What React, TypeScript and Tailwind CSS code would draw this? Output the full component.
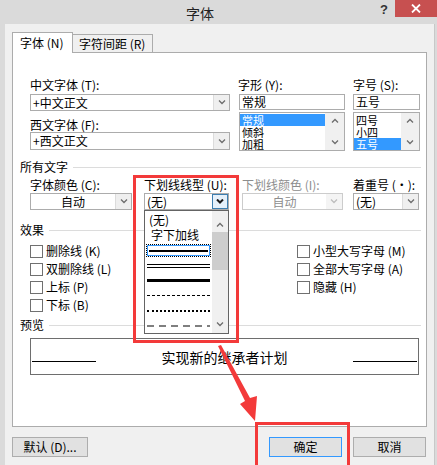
import React from 'react';

const RED = 'border-[#f33a3a]';

function Chevron({ up = false, bold = false, color = '#6d6d6d' }: { up?: boolean; bold?: boolean; color?: string }) {
  return (
    <svg width="8" height="5" viewBox="0 0 8 5">
      <path d={up ? 'M1 4.5 L4 1.5 L7 4.5' : 'M1 0.5 L4 3.5 L7 0.5'} stroke={color} strokeWidth={bold ? 2 : 1.3} fill="none" />
    </svg>
  );
}

function Combo({
  w,
  h,
  text,
  center = false,
  disabled = false,
  active = false,
}: {
  w: string;
  h: string;
  text: string;
  center?: boolean;
  disabled?: boolean;
  active?: boolean;
}) {
  return (
    <div className={`${w} ${h} flex bg-white border ${disabled ? 'border-[#cccccc]' : 'border-[#acacac]'}`}>
      <div
        className={`flex-1 flex items-center leading-[14px] ${center ? 'justify-center' : 'pl-[2px]'} ${
          disabled ? 'text-[#8d8d8d]' : 'text-black'
        }`}
      >
        {text}
      </div>
      <div
        className={`w-[16px] flex items-center justify-center ${
          active ? 'bg-[#e5f1fb] border border-[#3c7fb1]' : disabled ? 'bg-[#f4f4f4]' : 'bg-[#efefef] border-l border-[#dcdcdc]'
        }`}
      >
        <Chevron bold={active} color={active ? '#1a1a1a' : disabled ? '#bdbdbd' : '#6d6d6d'} />
      </div>
    </div>
  );
}

function Label({ children, className = '', gray = false }: { children: React.ReactNode; className?: string; gray?: boolean }) {
  return <div className={`h-[14px] leading-[14px] whitespace-nowrap ${gray ? 'text-[#8d8d8d]' : ''} ${className}`}>{children}</div>;
}

function Section({ title, className = '' }: { title: string; className?: string }) {
  return (
    <div className={`flex items-center h-[14px] leading-[14px] pr-[5px] ${className}`}>
      <span>{title}</span>
      <div className="flex-1 h-px bg-[#dcdcdc] ml-[5px]" />
    </div>
  );
}

function ListBox({ items, selected, w, itemW }: { items: string[]; selected: number; w: string; itemW: string }) {
  return (
    <div className={`${w} h-[39px] mt-[2px] flex bg-white border border-[#acacac]`}>
      <div className={`${itemW} flex flex-col text-[11px] leading-[12px] pt-[1px]`}>
        {items.map((it, i) => (
          <div key={it} className={`h-[12px] pl-[2px] ${i === selected ? 'bg-[#3399ff] text-white' : ''}`}>
            {it}
          </div>
        ))}
      </div>
      <div className="flex-1 bg-[#f0f0f0] flex flex-col items-center justify-between py-[5px]">
        <Chevron up />
        <Chevron />
      </div>
    </div>
  );
}

function Check({ text }: { text: string }) {
  return (
    <div className="h-[18px] flex items-center">
      <div className="w-[13px] h-[13px] border border-[#707070] bg-white" />
      <span className="ml-[3px] leading-[14px]">{text}</span>
    </div>
  );
}

function Button({ text, w, primary = false }: { text: string; w: string; primary?: boolean }) {
  return (
    <div
      className={`${w} h-[20px] flex items-center justify-center leading-[14px] bg-[#e1e1e1] border ${
        primary ? 'border-[#3399ff]' : 'border-[#adadad]'
      }`}
    >
      {text}
    </div>
  );
}

function UnderlineDropdown() {
  return (
    <div className="absolute left-[144px] top-[210px] w-[85px] h-[124px] bg-white border border-[#646464] flex">
      <div className="w-[67px] flex flex-col pt-[2px]">
        <div className="h-[15px] leading-[14px] pl-[4px]">(无)</div>
        <div className="h-[15px] leading-[14px] pl-[6px]">字下加线</div>
        <div className="h-[15px] pl-[1px] flex items-center">
          <div className="w-[65px] h-[13px] border border-dotted border-black">
            <div className="w-full h-full border border-[#3399ff] flex items-center px-[1px]">
              <div className="w-full h-[2px] bg-black" />
            </div>
          </div>
        </div>
        <div className="h-[15px] pl-[2px] flex flex-col justify-center">
          <div className="w-[63px] h-px bg-black" />
          <div className="w-[63px] h-px bg-black mt-[2px]" />
        </div>
        <div className="h-[15px] pl-[2px] flex items-center">
          <div className="w-[63px] h-[3px] bg-black" />
        </div>
        <div className="h-[15px] pl-[2px] flex items-center">
          <div className="w-[63px] border-t border-dashed border-black" />
        </div>
        <div className="h-[15px] pl-[2px] flex items-center">
          <div className="w-[63px] border-t-2 border-dotted border-black" />
        </div>
        <div className="h-[15px] pl-[2px] flex items-center">
          <svg width="63" height="2" viewBox="0 0 63 2">
            <line x1="0" y1="1" x2="63" y2="1" stroke="black" strokeWidth="1.2" strokeDasharray="7 5" />
          </svg>
        </div>
      </div>
      <div className="flex-1 bg-[#f0f0f0] flex flex-col items-center">
        <div className="mt-[11px]">
          <Chevron up />
        </div>
        <div className="mt-[5px] w-full h-[38px] bg-[#cdcdcd]" />
        <div className="mt-auto mb-[6px]">
          <Chevron />
        </div>
      </div>
    </div>
  );
}

export default function App() {
  return (
    <div className="relative w-[437px] h-[465px] overflow-hidden bg-[#dadada] text-[12px] text-black font-['Noto_Sans_CJK_SC','Liberation_Sans',sans-serif]">
      {/* title bar */}
      <div className="h-[24px] flex items-start">
        <div className="flex-1 flex justify-center pt-[5px] pl-[20px] text-[14px] leading-[16px] text-[#222]">字体</div>
        <div className="w-[12px] pt-[3px] text-[13px] leading-[14px] font-bold text-[#333] font-['Liberation_Sans',sans-serif]">?</div>
        <div className="ml-[3px] w-[42px] h-[17px] bg-[#c75050] flex items-center justify-center">
          <svg width="10" height="9" viewBox="0 0 10 9">
            <path d="M1 0.5 L9 8.5 M9 0.5 L1 8.5" stroke="white" strokeWidth="1.8" />
          </svg>
        </div>
      </div>

      {/* dialog body */}
      <div className="ml-[5px] mr-[2px] h-[441px] bg-[#f0f0f0] pl-[7px] pt-[8px] border-r border-[#c8c8c8]">
        {/* tabs */}
        <div className="flex items-end h-[20px]">
          <div className="relative z-10 w-[61px] h-[21px] -mb-px bg-white border border-b-0 border-[#acacac] flex items-center pl-[7px] leading-[14px]">
            字体 (N)
          </div>
          <div className="w-[80px] h-[18px] bg-[#f0f0f0] border border-l-0 border-b-0 border-[#acacac] flex items-center pl-[6px] leading-[14px]">
            字符间距 (R)
          </div>
        </div>

        {/* panel */}
        <div className="w-[415px] h-[375px] bg-white border border-[#acacac] pl-[7px]">
          <div className="flex pl-[10px] pt-[25px]">
            <div className="w-[200px]">
              <Label>中文字体 (T):</Label>
              <div className="mt-[2px]">
                <Combo w="w-[200px]" h="h-[17px]" text="+中文正文" />
              </div>
              <Label className="mt-[7px]">西文字体 (F):</Label>
              <Combo w="w-[200px]" h="h-[18px]" text="+西文正文" />
            </div>
            <div className="ml-[9px] w-[106px]">
              <Label className="-ml-[1px]">字形 (Y):</Label>
              <div className="mt-[2px] h-[16px] bg-white border border-[#acacac] pl-[2px] leading-[14px]">常规</div>
              <ListBox items={['常规', '倾斜', '加粗']} selected={0} w="w-[106px]" itemW="w-[85px]" />
            </div>
            <div className="ml-[8px] w-[67px]">
              <Label>字号 (S):</Label>
              <div className="mt-[2px] h-[16px] bg-white border border-[#acacac] pl-[2px] leading-[14px]">五号</div>
              <ListBox items={['四号', '小四', '五号']} selected={2} w="w-[67px]" itemW="w-[47px]" />
            </div>
          </div>

          <Section title="所有文字" className="mt-[9px]" />

          <div className="flex pl-[10px] mt-[4px]">
            <div className="w-[102px]">
              <Label>字体颜色 (C):</Label>
              <div className="mt-[1px]">
                <Combo w="w-[102px]" h="h-[17px]" text="自动" center />
              </div>
            </div>
            <div className="ml-[12px] w-[85px]">
              <Label>下划线线型 (U):</Label>
              <div className="mt-[1px]">
                <Combo w="w-[85px]" h="h-[17px]" text="(无)" active />
              </div>
            </div>
            <div className="ml-[13px] w-[101px]">
              <Label gray>下划线颜色 (I):</Label>
              <div className="mt-[1px]">
                <Combo w="w-[101px]" h="h-[17px]" text="自动" center disabled />
              </div>
            </div>
            <div className="ml-[10px] w-[66px]">
              <Label>着重号 (·):</Label>
              <div className="mt-[1px]">
                <Combo w="w-[66px]" h="h-[17px]" text="(无)" />
              </div>
            </div>
          </div>

          <Section title="效果" className="mt-[13px]" />

          <div className="flex pl-[10px] mt-[5px]">
            <div className="w-[267px]">
              <Check text="删除线 (K)" />
              <Check text="双删除线 (L)" />
              <Check text="上标 (P)" />
              <Check text="下标 (B)" />
            </div>
            <div>
              <Check text="小型大写字母 (M)" />
              <Check text="全部大写字母 (A)" />
              <Check text="隐藏 (H)" />
            </div>
          </div>

          <Section title="预览" className="mt-[4px]" />

          <div className="ml-[10px] mt-[6px] w-[389px] h-[37px] border border-[#6e6e6e] flex items-center justify-between px-[1px]">
            <div className="w-[64px] h-px bg-black mt-[10px]" />
            <div className="text-[14px] leading-[16px]">实现新的继承者计划</div>
            <div className="w-[64px] h-px bg-black mt-[10px]" />
          </div>
        </div>

        {/* buttons */}
        <div className="flex mt-[10px]">
          <Button text="默认 (D)..." w="w-[76px]" />
          <div className="ml-[181px]">
            <Button text="确定" w="w-[73px]" primary />
          </div>
          <div className="ml-[11px]">
            <Button text="取消" w="w-[73px]" />
          </div>
        </div>
      </div>

      {/* open dropdown list */}
      <UnderlineDropdown />

      {/* annotations */}
      <div className={`absolute left-[133px] top-[175px] w-[106px] h-[168px] border-[3px] ${RED}`} />
      <div className={`absolute left-[255px] top-[422px] w-[95px] h-[50px] border-[3px] ${RED}`} />
      <svg className="absolute left-0 top-0" width="437" height="465" viewBox="0 0 437 465">
        <polygon points="218,346 221,345 250,398 257,396 255,421 240,404 245,401" fill="#f33a3a" />
      </svg>
    </div>
  );
}
